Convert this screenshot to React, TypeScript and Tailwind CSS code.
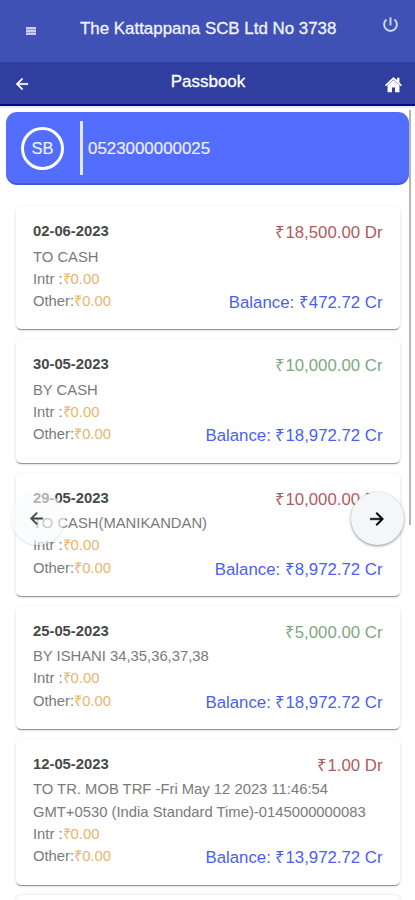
import { clsx } from 'clsx';

interface Transaction {
  date: string;
  narration: string;
  amount: string;
  type: 'Dr' | 'Cr';
  balance: string;
}

const transactions: Transaction[] = [
  { date: '02-06-2023', narration: 'TO CASH', amount: '18,500.00', type: 'Dr', balance: '472.72' },
  { date: '30-05-2023', narration: 'BY CASH', amount: '10,000.00', type: 'Cr', balance: '18,972.72' },
  { date: '29-05-2023', narration: 'TO CASH(MANIKANDAN)', amount: '10,000.00', type: 'Dr', balance: '8,972.72' },
  { date: '25-05-2023', narration: 'BY ISHANI 34,35,36,37,38', amount: '5,000.00', type: 'Cr', balance: '18,972.72' },
  {
    date: '12-05-2023',
    narration: 'TO TR. MOB TRF -Fri May 12 2023 11:46:54 GMT+0530 (India Standard Time)-0145000000083',
    amount: '1.00',
    type: 'Dr',
    balance: '13,972.72',
  },
];

function ArrowIcon({ className }: { className?: string }) {
  return (
    <svg viewBox="0 0 24 24" fill="currentColor" className={className}>
      <path d="M12 4l-1.41 1.41L16.17 11H4v2h12.17l-5.58 5.59L12 20l8-8z" stroke="currentColor" strokeWidth="0.5" />
    </svg>
  );
}

function TransactionCard({ date, narration, amount, type, balance }: Transaction) {
  return (
    <div className="rounded-[5px] bg-white pt-[14px] pr-[17.5px] pb-[17px] pl-[17px] text-[14.8px] leading-[22.3px] text-[#7a7a7a] shadow-[0_2px_1px_-1px_rgba(0,0,0,0.3),0_1px_1px_0_rgba(0,0,0,0.12),0_1px_3px_0_rgba(0,0,0,0.14)]">
      <div className="mb-[3px] flex h-[22.3px] justify-between">
        <span className="font-bold text-[#484848]">{date}</span>
        <span className={clsx('pt-[2px] text-[16.8px]', type === 'Dr' ? 'text-[#b15a5d]' : 'text-[#7da882]')}>
          ₹{amount} {type}
        </span>
      </div>
      <p>{narration}</p>
      <p>
        Intr :<span className="text-[#e8b56d]">₹0.00</span>
      </p>
      <div className="flex h-[22.3px] justify-between">
        <p>
          Other:<span className="text-[#e8b56d]">₹0.00</span>
        </p>
        <p className="pt-[2px] text-[16.8px] text-[#4a5ff0]">Balance: ₹{balance} Cr</p>
      </div>
    </div>
  );
}

export default function App() {
  return (
    <div className="relative flex h-[900px] w-[415px] flex-col overflow-hidden bg-white font-['Liberation_Sans',Arial,sans-serif]">
      <header className="flex h-[62px] shrink-0 items-center bg-[#3f51b5] pr-[15px] pb-[5px] pl-[26px] text-white">
        <div className="mt-[5px] flex w-[10px] flex-col gap-[1px] bg-[#8f97d2]">
          <span className="h-[2px] bg-[#c9cdeb]" />
          <span className="h-[2px] bg-[#c9cdeb]" />
          <span className="h-[2px] bg-[#c9cdeb]" />
        </div>
        <h1 className="ml-[44px] flex-1 text-[16.9px] whitespace-nowrap text-[#f1f2fb] [-webkit-text-stroke:0.3px]">
          The Kattappana SCB Ltd No 3738
        </h1>
        <svg viewBox="0 0 24 24" fill="currentColor" className="mb-[8px] h-[19px] w-[19px] text-[#d5d9f0]">
          <path
            d="M13 3h-2v10h2V3zm4.83 2.17l-1.42 1.42C17.99 7.86 19 9.81 19 12c0 3.87-3.13 7-7 7s-7-3.13-7-7c0-2.19 1.01-4.14 2.58-5.42L6.17 5.17C4.23 6.82 3 9.26 3 12c0 4.97 4.03 9 9 9s9-4.03 9-9c0-2.74-1.23-5.18-3.17-6.83z"
            stroke="currentColor"
            strokeWidth="0.4"
          />
        </svg>
      </header>

      <nav className="flex h-[44px] shrink-0 items-center border-b-2 border-[#03068f] bg-[#303f9f] pr-[13px] pl-[13px] text-white">
        <ArrowIcon className="mt-[2px] h-[18px] w-[18px] rotate-180" />
        <h2 className="flex-1 pb-[3px] text-center text-[17px] [-webkit-text-stroke:0.3px]">Passbook</h2>
        <svg viewBox="0 0 20 20" fill="currentColor" className="mt-[2px] h-[17px] w-[17px]">
          <path d="M10 1.2L0 10.6l1.3 1.5L10 4.2l8.7 7.9 1.3-1.5-3-2.8V2h-2.8v3.1z" />
          <path d="M10 4.6l-7 6.3V19h5.2v-5.6h3.6V19H17v-8.1z" />
        </svg>
      </nav>

      <main className="flex min-h-0 flex-1 border-t-2 border-[#ebebf0] pl-[6px]">
        <div className="w-[403px] shrink-0 pt-[4px]">
          <div className="flex h-[73px] items-center rounded-[11px] border-b-2 border-[#4059dc] bg-[#536dfe] pl-[15px] text-[16.9px] text-[#eceffe]">
            <div className="mt-[2px] flex h-[43px] w-[43px] items-center justify-center rounded-full border-[3px] border-white text-[16.5px] [-webkit-text-stroke:0.2px]">
              SB
            </div>
            <div className="ml-[16px] h-[54px] w-[3px] bg-[#e2e7ff]" />
            <span className="mt-[2px] ml-[5px] [-webkit-text-stroke:0.2px]">0523000000025</span>
          </div>

          <div className="mt-[21.3px] mr-[9px] ml-[10px] flex flex-col gap-[10px]">
            {transactions.map((item) => (
              <TransactionCard key={item.date} {...item} />
            ))}
            <div className="h-[40px] shrink-0 rounded-[5px] bg-white shadow-[0_0_3px_rgba(0,0,0,0.16)]" />
          </div>
        </div>
        {/* scroll thumb */}
        <div className="mt-[2px] h-[415px] w-[2px] bg-[#b5b5b5]" />
      </main>

      {/* page navigation buttons floating over the list */}
      <button className="absolute top-[491px] left-[11px] flex h-[54px] w-[54px] items-center justify-center rounded-full bg-[#f8fafc]/60 text-[#444] shadow-[0_1px_2px_rgba(0,0,0,0.14)]">
        <ArrowIcon className="mr-[3px] h-[19px] w-[19px] rotate-180" />
      </button>
      <button className="absolute top-[492px] left-[351px] flex h-[53px] w-[53px] items-center justify-center rounded-full bg-[#f4f6f9] text-black shadow-[0_1px_3px_rgba(0,0,0,0.45)]">
        <ArrowIcon className="mr-[2px] h-[20px] w-[20px]" />
      </button>
    </div>
  );
}
